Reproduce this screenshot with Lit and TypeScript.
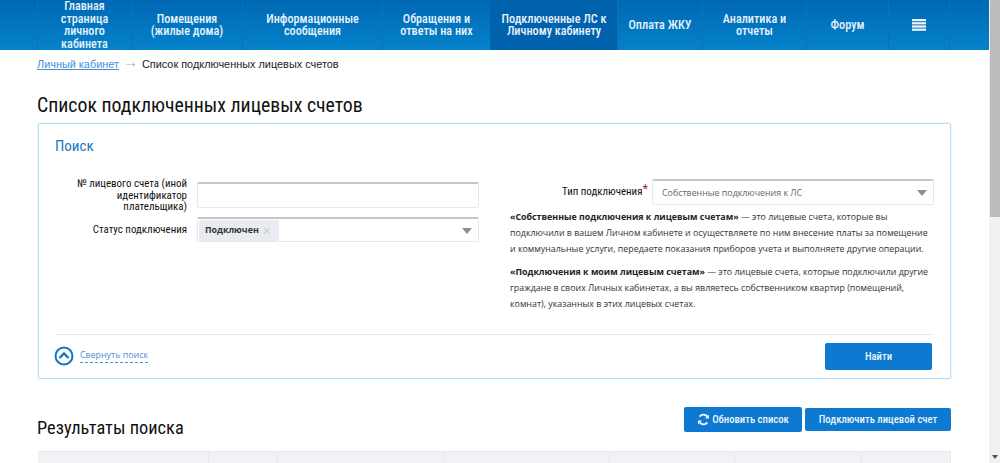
import { LitElement, html, css } from "lit";
import { customElement } from "lit/decorators.js";

const NAV: [string[], number][] = [
  [["Главная", "страница", "личного", "кабинета"], 94],
  [["Помещения", "(жилые дома)"], 111],
  [["Информационные", "сообщения"], 140],
  [["Обращения и", "ответы на них"], 108],
  [["Подключенные ЛС к", "Личному кабинету"], 127],
  [["Оплата ЖКУ"], 85],
  [["Аналитика и", "отчеты"], 104],
  [["Форум"], 82],
];

@customElement("app-root")
export class AppRoot extends LitElement {
  static styles = css`
    :host { display: flex; width: 1000px; height: 463px; overflow: hidden; background: #fff; color: #111; font-family: "Liberation Sans", Arial, sans-serif; }
    * { box-sizing: border-box; }
    .page { width: 989px; flex: none; display: flex; flex-direction: column; overflow: hidden; height: 463px; }
    .cond { font-family: Roboto, sans-serif; font-stretch: 75%; white-space: nowrap; }
    .nav { height: 50px; flex: none; background: linear-gradient(#0068b4, #0582ca); display: flex; padding-left: 38px; overflow: hidden; }
    .item { height: 50px; flex: none; display: flex; align-items: center; justify-content: center; text-align: center; color: #e6f3fb; border-right: 1px solid #0a72b8; border-left: 1px solid #0a72b8; margin-left: -1px; }
    .item .cond { font-size: 12.2px; line-height: 12.5px; font-weight: 500; }
    .item.active { background: #0062ad; border-color: #0062ad; }
    .crumbs { height: 28px; flex: none; margin: 0 38px 0 37px; display: flex; align-items: center; gap: 4px; font-size: 10.9px; padding-bottom: 1px; color: #222; }
    .crumbs a { color: #3f8fd6; text-decoration: underline; }
    .crumbs .arrow { color: #9fb4c4; font-size: 15px; line-height: 12px; padding-bottom: 4px; }
    h1 { margin: 14px 0 0 37px; height: 26px; flex: none; font-size: 19.8px; line-height: 26px; font-weight: 400; }
    .panel { margin: 5px 38px 0 38px; width: 913px; height: 256px; flex: none; border: 1px solid #b6dcf1; border-radius: 2px; box-shadow: 0 0 2px #cfe0ea; padding: 11px 16px 0; display: flex; flex-direction: column; }
    .panel h2 { margin: 0; height: 21px; flex: none; font-size: 15px; line-height: 21px; font-weight: 400; color: #1878bf; }
    .cols { display: flex; height: 178px; flex: none; }
    .left { width: 424px; padding: 22px 0 0 0; display: flex; flex-direction: column; gap: 4.5px; }
    .right { margin-left: 31px; width: 426px; padding-top: 23px; }
    .row { display: flex; align-items: center; gap: 10px; }
    .label { flex: none; font-size: 10.9px; line-height: 11.5px; text-align: right; color: #111; display: flex; justify-content: flex-end; }
    .left .label { width: 132px; }
    .field { height: 26px; border: 1px solid #e6e9ec; border-top: 2px solid #c3c7cb; border-radius: 2px; flex: none; width: 282px; display: flex; align-items: center; position: relative; background: #fff; }
    .field.short { height: 25px; }
    .chip { height: 21px; width: 80px; margin-left: 1px; background: #e8ecf0; border-radius: 2px; display: flex; align-items: center; padding-left: 6px; gap: 4px; font: bold 8.85px "Open Sans", sans-serif; color: #333; }
    .chip i { color: #c4c9cf; font-style: normal; font-size: 14px; font-weight: 400; }
    .caret { position: absolute; right: 6px; top: 9px; width: 0; height: 0; border-left: 5px solid transparent; border-right: 5px solid transparent; border-top: 6px solid #8a8f94; }
    .right .label { width: 138px; }
    .right .row { gap: 4px; }
    .right .label b { color: #b3213a; font-weight: 400; font-size: 13px; vertical-align: 2px; line-height: 0; }
    .selected { padding-left: 9px; font: 8.85px "Open Sans", sans-serif; color: #666; }
    .desc { font: 8.85px/16px "Open Sans", sans-serif; color: #333; margin-top: 4px; width: 425px; }
    .desc p { margin: 0 0 7px; }
    .desc b { color: #222; }
    .foot { border-top: 1px solid #e6eaee; flex: 1; display: flex; justify-content: space-between; align-items: flex-start; padding: 8px 2px 0 0; }
    .toggle { display: flex; align-items: center; gap: 6px; margin-top: 3px; }
    .toggle svg { display: block; margin-left: -1px; }
    .toggle span { color: #4a90d4; font: 8.85px "Open Sans", sans-serif; border-bottom: 1px dashed #4a90d4; padding-bottom: 1px; }
    .btn { border: 0; background: #0e79d0; color: #eaf4fc; border-radius: 2px; display: flex; align-items: center; justify-content: center; padding: 0; }
    .btn .cond { font-size: 10.7px; font-weight: 500; }
    .find { width: 107px; height: 27px; }
    .results { margin: 0 38px 0 37px; display: flex; justify-content: space-between; align-items: flex-start; height: 72px; flex: none; padding-top: 28px; }
    .results h2 { margin: 0; padding-top: 8px; height: 34px; font-size: 18.4px; line-height: 26px; font-weight: 400; }
    .actions { display: flex; gap: 3px; align-items: center; }
    .refresh { width: 118px; height: 25px; gap: 2px; }
    .connect { width: 146px; height: 23px; }
    .thead { margin-left: 38px; width: 913px; height: 12px; flex: none; background: #f0f2f5; display: flex; border-top: 1px solid #e8ebee; }
    .thead div { border-right: 1px solid #e5e8ec; height: 100%; flex: none; }
    .scroll { width: 11px; flex: none; background: #f1f1f1; position: relative; height: 463px; display: flex; flex-direction: column; align-items: center; }
    .thumb { width: 10px; height: 217px; background: #bcbcbc; }
    .scroll .down { position: absolute; left: 3px; bottom: 4px; width: 0; height: 0; border-left: 3px solid transparent; border-right: 3px solid transparent; border-top: 4px solid #505050; }
  `;

  render() {
    const cols = [171, 69, 167, 165, 125, 127, 89];
    return html`
      <div class="page">
        <nav class="nav">
          ${NAV.map(([lines, w], i) => html`<div class="item ${i === 4 ? "active" : ""}" style="width:${w + 1}px"><span class="cond">${lines.map((l, j) => html`${j ? html`<br />` : ""}${l}`)}</span></div>`)}
          <div class="item" style="width:62px">
            <svg width="14" height="12" viewBox="0 0 14 12" fill="#eef6fb"><rect y="0" width="14" height="2.2"/><rect y="3.2" width="14" height="2.2"/><rect y="6.4" width="14" height="2.2"/><rect y="9.6" width="14" height="2.2"/></svg>
          </div>
        </nav>
        <div class="crumbs"><a>Личный кабинет</a><span class="arrow">→</span><span>Список подключенных лицевых счетов</span></div>
        <h1><span class="cond">Список подключенных лицевых счетов</span></h1>
        <section class="panel">
          <h2><span class="cond">Поиск</span></h2>
          <div class="cols">
            <div class="left">
              <div class="row">
                <div class="label"><span class="cond">№ лицевого счета (иной<br />идентификатор<br />плательщика)</span></div>
                <div class="field"></div>
              </div>
              <div class="row">
                <div class="label"><span class="cond">Статус подключения</span></div>
                <div class="field short"><div class="chip">Подключен <i>×</i></div><span class="caret"></span></div>
              </div>
            </div>
            <div class="right">
              <div class="row">
                <div class="label"><span class="cond">Тип подключения<b>*</b></span></div>
                <div class="field selected">Собственные подключения к ЛС<span class="caret"></span></div>
              </div>
              <div class="desc">
                <p><b>«Собственные подключения к лицевым счетам»</b> — это лицевые счета, которые вы подключили в вашем Личном кабинете и осуществляете по ним внесение платы за помещение и коммунальные услуги, передаете показания приборов учета и выполняете другие операции.</p>
                <p><b>«Подключения к моим лицевым счетам»</b> — это лицевые счета, которые подключили другие граждане в своих Личных кабинетах, а вы являетесь собственником квартир (помещений, комнат), указанных в этих лицевых счетах.</p>
              </div>
            </div>
          </div>
          <div class="foot">
            <div class="toggle">
              <svg width="20" height="20" viewBox="0 0 20 20" fill="none" stroke="#1176c6"><circle cx="10" cy="10" r="8.5" stroke-width="2"/><path d="M5.5 12 L10 7.5 L14.5 12" stroke-width="2.4"/></svg>
              <span>Свернуть поиск</span>
            </div>
            <button class="btn find"><span class="cond">Найти</span></button>
          </div>
        </section>
        <div class="results">
          <h2><span class="cond">Результаты поиска</span></h2>
          <div class="actions">
            <button class="btn refresh">
              <svg width="13" height="13" viewBox="0 0 13 13" fill="none" stroke="#eaf4fc" stroke-width="1.8"><path d="M11 5 A4.8 4.8 0 0 0 2.6 3.6"/><path d="M2 8 A4.8 4.8 0 0 0 10.4 9.4"/><path d="M12 1.4 V5.4 H8 Z M1 11.6 V7.6 H5 Z" fill="#eaf4fc" stroke="none"/></svg>
              <span class="cond">Обновить список</span>
            </button>
            <button class="btn connect"><span class="cond">Подключить лицевой счет</span></button>
          </div>
        </div>
        <div class="thead">${cols.map((w) => html`<div style="width:${w}px"></div>`)}</div>
      </div>
      <aside class="scroll"><div class="thumb"></div><span class="down"></span></aside>
    `;
  }
}
